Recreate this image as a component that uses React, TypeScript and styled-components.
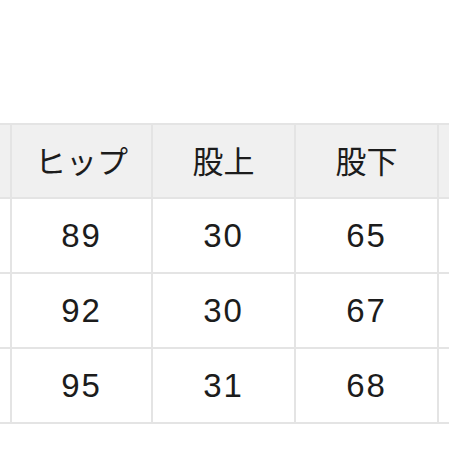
import React from "react";
import styled, { createGlobalStyle } from "styled-components";

const Global = createGlobalStyle`
  html, body {
    margin: 0;
    padding: 0;
    background: #ffffff;
    overflow: hidden;
  }
  body {
    font-family: "Noto Sans CJK JP", "Noto Sans", sans-serif;
    color: #1c1c1c;
  }
`;

const Page = styled.div`
  width: 449px;
  height: 449px;
  padding-top: 123px;
  box-sizing: border-box;
  overflow: hidden;
`;

const Table = styled.div`
  display: grid;
  grid-template-columns: 10px 139px 141px 141px 1fr;
  grid-auto-rows: 73px;
  grid-template-rows: 72px;
  column-gap: 2px;
  row-gap: 2px;
  padding: 2px 0;
  background: #e4e4e4;
`;

const Cell = styled.div<{ $head?: boolean }>`
  background: ${(p) => (p.$head ? "#f0f0f0" : "#ffffff")};
  display: flex;
  align-items: center;
  justify-content: center;
  font-size: ${(p) => (p.$head ? "31px" : "33px")};
  font-family: ${(p) =>
    p.$head
      ? '"Noto Sans CJK JP", sans-serif'
      : '"Liberation Sans", "Noto Sans CJK JP", sans-serif'};
  font-weight: 400;
  letter-spacing: ${(p) => (p.$head ? "0" : "2px")};
  padding-bottom: ${(p) => (p.$head ? "3px" : "0")};
  box-sizing: border-box;
  line-height: 1;
  overflow: hidden;
  white-space: nowrap;
`;

const headers = ["ヒップ", "股上", "股下"];
const rows = [
  ["89", "30", "65"],
  ["92", "30", "67"],
  ["95", "31", "68"],
];

export default function App() {
  return (
    <>
      <Global />
      <Page>
        <Table>
          <Cell $head />
          {headers.map((h) => (
            <Cell $head key={h}>
              {h}
            </Cell>
          ))}
          <Cell $head />
          {rows.map((r, i) => (
            <React.Fragment key={i}>
              <Cell />
              {r.map((v, j) => (
                <Cell key={j}>{v}</Cell>
              ))}
              <Cell />
            </React.Fragment>
          ))}
        </Table>
      </Page>
    </>
  );
}
